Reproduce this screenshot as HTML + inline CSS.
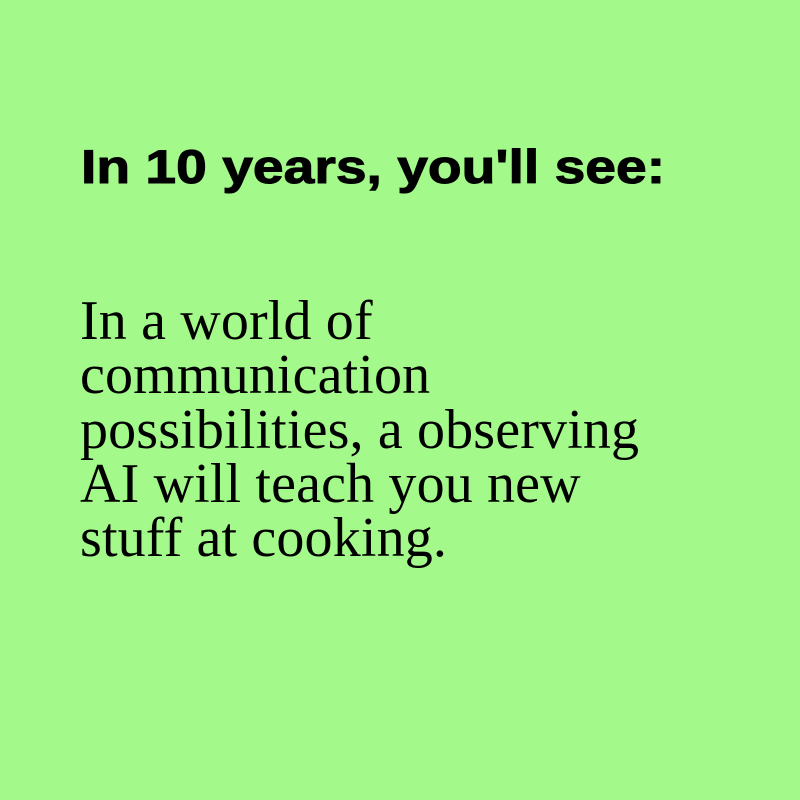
<!DOCTYPE html>
<html><head><style>
body{margin:0;width:800px;height:800px;background:#a3f98a;position:relative;overflow:hidden}
h1{position:absolute;left:81px;top:143px;margin:0;font:bold 47px/1 "Liberation Sans",sans-serif;color:#000;transform:scaleX(1.175);transform-origin:0 0;white-space:nowrap;-webkit-text-stroke:1px #000}
p{position:absolute;left:80px;top:294px;margin:0;font:56px/54.3px "Liberation Serif",serif;color:#000;white-space:nowrap;letter-spacing:0.15px}
</style></head><body>
<h1>In 10 years, you'll see:</h1>
<p>In a world of<br>communication<br>possibilities, a observing<br>AI will teach you new<br>stuff at cooking.</p>
</body></html>
